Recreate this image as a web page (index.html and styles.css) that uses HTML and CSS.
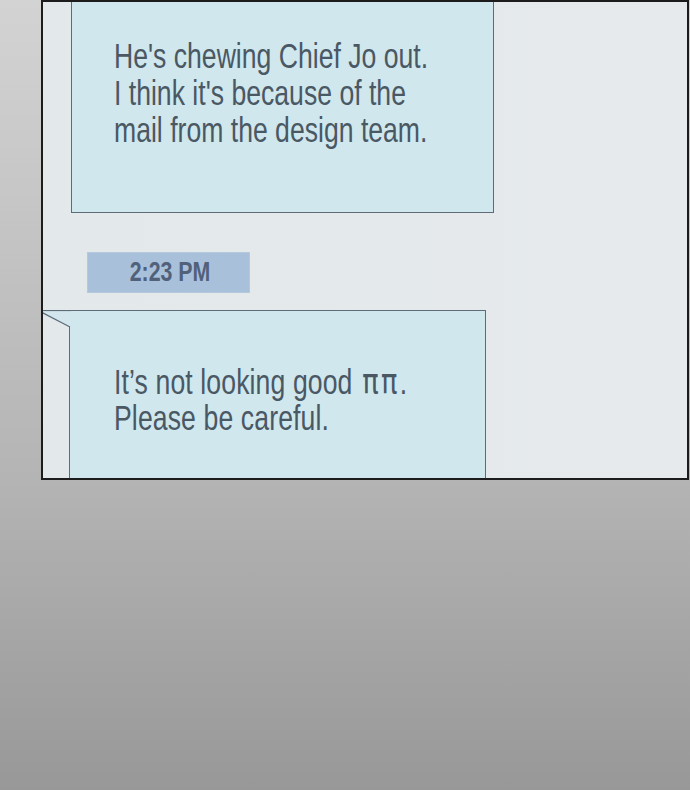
FILE: index.html
```html
<!DOCTYPE html>
<html lang="en">

<head>
  <meta charset="UTF-8">
  <title>Chat panel</title>
  <meta name="viewport" content="width=device-width, initial-scale=1.0">
  <link rel="stylesheet" href="styles.css">
</head>

<body>
  <main class="panel">
    <div class="bubble bubble-top">
      <p class="msg">He's chewing Chief Jo out.<br>I think it's because of the<br>mail from the design team.</p>
    </div>

    <div class="stamp"><span>2:23 PM</span></div>

    <div class="bubble bubble-in">
      <!-- little tail pointing at the frame edge -->
      <svg class="tail" width="29" height="19" viewBox="0 0 29 19">
        <polygon points="0,0.5 28,0.5 28,17 0,2.5" fill="#d3e6ed"/>
        <line x1="0" y1="0.5" x2="29" y2="0.5" stroke="#5e6c79" stroke-width="1.2"/>
        <line x1="0" y1="2.5" x2="28" y2="17" stroke="#5e6c79" stroke-width="1.2"/>
      </svg>
      <p class="msg">It’s not looking good <span class="cry">ππ</span>.<br>Please be careful.</p>
    </div>
  </main>
</body>

</html>
```

FILE: styles.css
```css
:root {
  --frame: #1c1c1c;
  --panel-bg: #e4e9ec;
  --bubble-bg: #d0e7ee;
  --bubble-line: #5e6c79;
  --text: #4a5864;
  --stamp-bg: #a8c0da;
  --stamp-text: #52617a;
}

* {
  box-sizing: border-box;
}

body {
  margin: 0;
  min-height: 790px;
  font-family: "Liberation Sans", Arial, sans-serif;
  background: linear-gradient(to bottom, #d3d3d3 0, #b4b4b4 480px, #989898 790px);
}

/* comic frame */
.panel {
  display: flex;
  flex-direction: column;
  align-items: flex-start;
  width: 648px;
  height: 480px;
  margin-left: 41px;
  border: 2px solid var(--frame);
  background: linear-gradient(to right, #e3e8eb, #e6eaec);
  overflow: hidden;
}

.bubble {
  position: relative;
  background: var(--bubble-bg);
  border: 1.3px solid var(--bubble-line);
}
.bubble-top {
  width: 423px;
  height: 211px;
  margin-left: 28px;
  border-top: none;
  padding: 35px 0 0 42px;
}
.bubble-in {
  width: 417px;
  flex: 1;
  margin: 17px 0 0 26px;
  border-bottom: none;
  padding: 53px 0 0 44px;
}
.tail {
  position: absolute;
  left: -28px;
  top: -1.3px;
}

.msg {
  margin: 0;
  font-size: 35px;
  line-height: 37px;
  color: var(--text);
  white-space: nowrap;
  transform: scaleX(.76);
  transform-origin: left top;
}
.bubble-in .msg {line-height: 36px; letter-spacing: .15px}
.cry {
  font-family: "DejaVu Sans", sans-serif;
  font-size: 36px;
  letter-spacing: 3px;
  margin-left: 3px;
}

.stamp {
  width: 163px;
  height: 41px;
  margin: 39px 0 0 44px;
  background: var(--stamp-bg);
  border: 1px solid #b4c8de;
  display: flex;
  align-items: center;
  justify-content: center;
}
.stamp span {
  display: inline-block;
  font-size: 27px;
  font-weight: 700;
  color: var(--stamp-text);
  transform: scaleX(.79);
  margin-left: 4px;
}
```
